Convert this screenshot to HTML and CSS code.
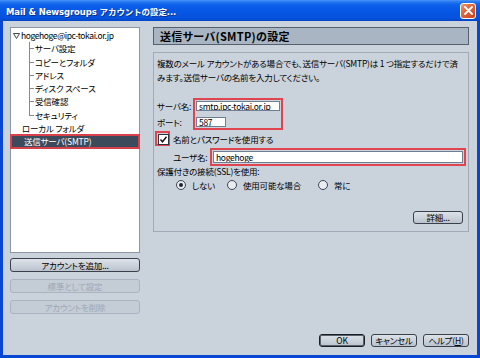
FILE: index.html
```html
<!DOCTYPE html>
<html lang="ja">
<head>
<meta charset="utf-8">
<title>Mail &amp; Newsgroups アカウントの設定</title>
<link rel="stylesheet" href="styles.css">
</head>
<body>
<div class="window">
  <div class="titlebar">
    <span class="title">Mail &amp; Newsgroups アカウントの設定...</span>
    <span class="close">
      <svg width="9" height="9" viewBox="0 0 9 9"><path d="M1 1L8 8M8 1L1 8" stroke="#fff" stroke-width="1.8" stroke-linecap="round"/></svg>
    </span>
  </div>
  <div class="frame">
    <div class="left">
      <div class="tree">
        <div class="row root"><svg class="tri" width="7" height="6" viewBox="0 0 7 6"><path d="M0.5 0.5H6.5L3.5 5.5Z" fill="none" stroke="#333" stroke-width="0.9"/></svg><span>hogehoge@ipc-tokai.or.jp</span></div>
        <div class="children">
          <div class="row child">サーバ設定</div>
          <div class="row child">コピーとフォルダ</div>
          <div class="row child">アドレス</div>
          <div class="row child">ディスク スペース</div>
          <div class="row child">受信確認</div>
          <div class="row child">セキュリティ</div>
        </div>
        <div class="row top">ローカル フォルダ</div>
        <div class="row top selected">送信サーバ(SMTP)</div>
      </div>
      <div class="lbuttons">
        <div class="btn lbtn">アカウントを追加...</div>
        <div class="btn lbtn disabled">標準として設定</div>
        <div class="btn lbtn disabled">アカウントを削除</div>
      </div>
    </div>
    <div class="right">
      <div class="header">送信サーバ(SMTP)の設定</div>
      <div class="content">
        <div class="desc">複数のメール アカウントがある場合でも、送信サーバ(SMTP)は 1 つ指定するだけで済<br>みます。送信サーバの名前を入力してください。</div>
        <div class="srv">
          <div class="srv-labels">
            <div class="lbl">サーバ名:</div>
            <div class="lbl">ポート:</div>
          </div>
          <div class="redbox srv-box">
            <div class="field f-server">smtp.ipc-tokai.or.jp</div>
            <div class="field f-port">587</div>
          </div>
        </div>
        <div class="chk-row">
          <div class="redbox chk-red">
            <div class="checkbox"><svg width="9" height="9" viewBox="0 0 9 9"><path d="M1.5 4.5L3.5 6.8L7.5 1.8" fill="none" stroke="#111" stroke-width="1.4"/></svg></div>
          </div>
          <span class="chk-label">名前とパスワードを使用する</span>
        </div>
        <div class="user-row">
          <span class="user-label">ユーザ名:</span>
          <div class="redbox user-box">
            <div class="field f-user">hogehoge</div>
          </div>
        </div>
        <div class="ssl">保護付きの接続(SSL)を使用:</div>
        <div class="radios">
          <div class="radio-item r1"><span class="radio on"></span><span>しない</span></div>
          <div class="radio-item r2"><span class="radio"></span><span>使用可能な場合</span></div>
          <div class="radio-item r3"><span class="radio"></span><span>常に</span></div>
        </div>
        <div class="btn detail">詳細...</div>
      </div>
      <div class="footer">
        <div class="btn fbtn default">OK</div>
        <div class="btn fbtn">キャンセル</div>
        <div class="btn fbtn">ヘルプ(<u>H</u>)</div>
      </div>
    </div>
  </div>
</div>
</body>
</html>
```
FILE: styles.css
```css
* { box-sizing: border-box; }
html, body { margin: 0; padding: 0; }
body {
  width: 480px;
  height: 358px;
  overflow: hidden;
  font-family: "Noto Sans CJK JP", sans-serif;
  font-size: 8.5px;
  letter-spacing: -0.2px;
  font-feature-settings: "palt" 1;
  color: #000;
  background: #0a46d4;
}
.window {
  width: 480px;
  height: 358px;
  display: flex;
  flex-direction: column;
}
.titlebar {
  height: 21px;
  flex: none;
  display: flex;
  align-items: center;
  justify-content: space-between;
  padding: 0 4px 0 6px;
  background: linear-gradient(to bottom, #4a95fa 0, #2676f2 2px, #0c60ea 5px, #0657e4 55%, #0552de 85%, #0446c6 100%);
  color: #fff;
}
.title {
  font: bold 8.5px "DejaVu Sans", "Noto Sans CJK JP", sans-serif;
  letter-spacing: -0.1px;
  text-shadow: 1px 1px 0 #0b2f8c;
  white-space: nowrap;
}
.close {
  width: 16px;
  height: 16px;
  border: 1px solid #fff;
  border-radius: 3px;
  background: linear-gradient(135deg, #ef9a78 0, #e0683f 40%, #c9441e 100%);
  display: flex;
  align-items: center;
  justify-content: center;
}
.frame {
  flex: 1;
  display: flex;
  gap: 13px;
  border: 3px solid #0a46d4;
  border-top: 0;
  background: #cad2db;
  padding: 6px 8px 8px 7px;
  min-height: 0;
}
.left {
  width: 130px;
  flex: none;
  display: flex;
  flex-direction: column;
}
.tree {
  height: 226px;
  background: #fff;
  border: 1px solid #8e98a5;
  padding-top: 1px;
}
.row {
  height: 13.25px;
  line-height: 13.25px;
  white-space: nowrap;
}
.root {
  display: flex;
  align-items: center;
  gap: 1px;
  padding-left: 2px;
  letter-spacing: -0.4px;
}
.child {
  padding-left: 24px;
  background:
    linear-gradient(#8a8a8a, #8a8a8a) 18px 0 / 1px 100% no-repeat,
    linear-gradient(#8a8a8a, #8a8a8a) 18px 50% / 5px 1px no-repeat;
}
.child:last-child {
  background:
    linear-gradient(#8a8a8a, #8a8a8a) 18px 0 / 1px 50% no-repeat,
    linear-gradient(#8a8a8a, #8a8a8a) 18px 50% / 5px 1px no-repeat;
}
.top { padding-left: 11px; }
.selected {
  background: #3d4a5c;
  color: #fff;
  padding-left: 13px;
  outline: 2px solid #d8404c;
  outline-offset: -1px;
}
.lbuttons {
  display: flex;
  flex-direction: column;
  gap: 7px;
  margin-top: 5px;
}
.btn {
  border: 1px solid #3a414b;
  border-radius: 3px;
  background: linear-gradient(#dde2e8, #bac3ce);
  text-align: center;
  white-space: nowrap;
}
.lbtn {
  height: 14px;
  line-height: 12px;
}
.btn.disabled {
  border-color: #aab3bf;
  background: #c4ccd6;
  color: #9ea7b3;
}
.right {
  width: 316px;
  flex: none;
  min-width: 0;
  display: flex;
  flex-direction: column;
}
.header {
  height: 18px;
  background: #a9b5c3;
  border: 1px solid #56606c;
  font-weight: bold;
  font-size: 11px;
  line-height: 16px;
  padding-left: 6px;
  letter-spacing: 0.3px;
}
.content {
  margin-top: 7px;
  height: 180px;
  border: 1px solid #a1aab6;
  display: flex;
  flex-direction: column;
  padding: 3px 2px 7px 3px;
  overflow: hidden;
}
.desc {
  line-height: 14px;
  white-space: nowrap;
}
.srv {
  display: flex;
  margin-top: 14px;
}
.srv-labels {
  width: 36px;
  display: flex;
  flex-direction: column;
  gap: 6px;
  padding-top: 3px;
}
.lbl {
  height: 10px;
  line-height: 10px;
  white-space: nowrap;
}
.redbox {
  border: 2px solid #e0444f;
  padding: 1px;
}
.srv-box {
  width: 90px;
  display: flex;
  flex-direction: column;
  gap: 6px;
}
.field {
  background: #fff;
  border: 1px solid #6f7f93;
  display: flex;
  align-items: center;
  padding-left: 2px;
  white-space: nowrap;
  overflow: hidden;
  font-size: 8.5px;
  letter-spacing: -0.3px;
}
.f-server { height: 10px; width: 84px; }
.f-port { height: 10px; width: 30px; }
.chk-row {
  display: flex;
  align-items: center;
  margin-top: 1px;
  margin-left: -2px;
}
.chk-red {
  width: 15px;
  height: 15px;
}
.checkbox {
  width: 11px;
  height: 11px;
  border: 1px solid #2c333c;
  background: #fff;
  display: flex;
  align-items: center;
  justify-content: center;
}
.chk-label { margin-left: 3px; }
.user-row {
  display: flex;
  align-items: center;
  margin-top: 2px;
  padding-left: 16px;
}
.user-label {
  width: 37px;
  white-space: nowrap;
}
.user-box {
  width: 256px;
}
.f-user { height: 12px; }
.ssl {
  line-height: 10px;
  height: 10px;
  white-space: nowrap;
}
.radios {
  display: flex;
  align-items: center;
  height: 14px;
  margin-top: 2px;
  padding-left: 19px;
}
.radio-item {
  display: flex;
  align-items: center;
  gap: 6px;
  white-space: nowrap;
}
.r1 { width: 51px; }
.r2 { width: 91px; }
.radio {
  width: 10px;
  height: 10px;
  border: 1px solid #3d4550;
  border-radius: 50%;
  background: #e9edf1;
  display: flex;
  align-items: center;
  justify-content: center;
}
.radio.on::after {
  content: "";
  width: 4px;
  height: 4px;
  border-radius: 50%;
  background: #1f252c;
}
.detail {
  margin-top: auto;
  align-self: flex-end;
  width: 50px;
  height: 13px;
  line-height: 11px;
  margin-right: 3px;
}
.footer {
  margin-top: auto;
  display: flex;
  justify-content: flex-end;
  gap: 6px;
}
.fbtn {
  width: 46px;
  height: 13px;
  line-height: 11px;
}
.fbtn.default {
  border-color: #1a1f26;
  box-shadow: inset 0 0 0 1px #59616c;
}
```
